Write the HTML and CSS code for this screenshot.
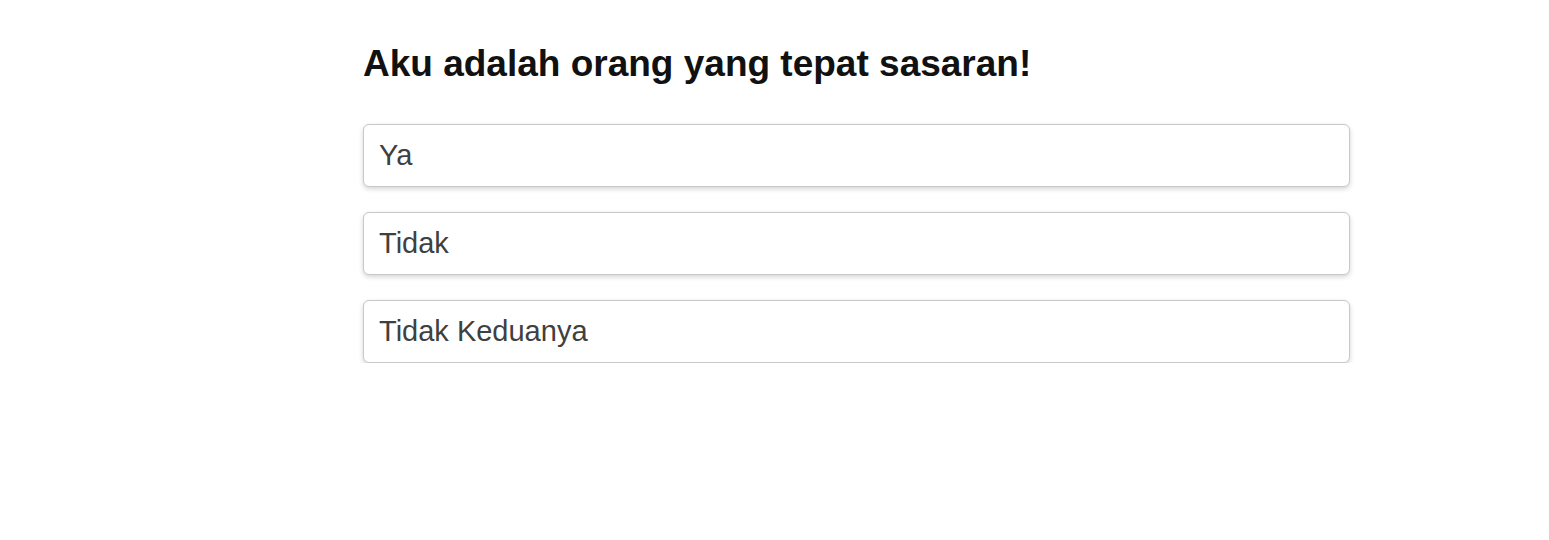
FILE: index.html
```html
<!DOCTYPE html>
<html lang="id">
<head>
<meta charset="utf-8">
<title>Kuis</title>
<link rel="stylesheet" href="styles.css">
</head>
<body>
<main class="quiz">
  <h1 class="question">Aku adalah orang yang tepat sasaran!</h1>
  <div class="options">
    <div class="option">Ya</div>
    <div class="option">Tidak</div>
    <div class="option">Tidak Keduanya</div>
  </div>
</main>
</body>
</html>
```

FILE: styles.css
```css
html, body {
  margin: 0;
  padding: 0;
  background: #ffffff;
}

body {
  font-family: "Liberation Sans", Arial, sans-serif;
}

.quiz {
  width: 987px;
  margin-left: 363px;
  padding-top: 43px;
}

.question {
  margin: 0 0 39px 0;
  font-size: 37px;
  font-weight: bold;
  color: #111111;
  line-height: normal;
}

.options {
  display: flex;
  flex-direction: column;
  gap: 25px;
}

.option {
  height: 61px;
  box-sizing: content-box;
  display: flex;
  align-items: center;
  padding: 0 15px;
  border: 1px solid #c8c8c8;
  border-radius: 6px;
  box-shadow: 0 2px 5px rgba(0, 0, 0, 0.17);
  font-size: 29px;
  color: #404040;
  background: #ffffff;
}
```
